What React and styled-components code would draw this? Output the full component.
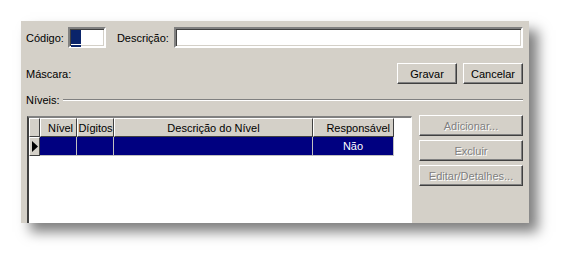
import React from 'react';
import styled, { createGlobalStyle } from 'styled-components';

const GlobalStyle = createGlobalStyle`
  body {
    margin: 0;
    background: #ffffff;
    font-family: "Liberation Sans", Arial, sans-serif;
    font-size: 11px;
    color: #000000;
    overflow: hidden;
  }
`;

const Page = styled.div`
  padding: 21px 0 0 21px;
  width: 571px;
  height: 266px;
  box-sizing: border-box;
`;

const Panel = styled.div`
  width: 508px;
  height: 202px;
  background: #d4d0c8;
  box-shadow: 9px 9px 12px rgba(0, 0, 0, 0.5);
  overflow: hidden;
  box-sizing: border-box;
  padding: 6px 6px 0 5px;
  display: flex;
  flex-direction: column;
`;

const Row = styled.div`
  display: flex;
  align-items: center;
  height: ${(p) => p.$h || 21}px;
  margin-top: ${(p) => p.$top || 0}px;
  flex: none;
`;

const Label = styled.span`
  white-space: nowrap;
  margin-right: ${(p) => p.$gap || 0}px;
`;

const Field = styled.div`
  height: 21px;
  box-sizing: border-box;
  background: #ffffff;
  border-style: solid;
  border-width: 2px;
  border-color: #808080 #ffffff #ffffff #808080;
  box-shadow: inset 1px 1px 0 #404040, inset -1px -1px 0 #d4d0c8;
  width: ${(p) => (p.$grow ? 'auto' : `${p.$w}px`)};
  flex: ${(p) => (p.$grow ? 1 : 'none')};
  margin-right: ${(p) => p.$gap || 0}px;
  padding: 1px 0 0 1px;
`;

const Caret = styled.div`
  width: 10px;
  height: 14px;
  background: #0a246a;
  border-bottom: 1px solid #ffffff;
  box-shadow: 0 2px 0 #0a246a;
`;

const Spacer = styled.div`
  flex: 1;
`;

const Button = styled.button`
  font-family: inherit;
  font-size: 11px;
  width: ${(p) => p.$w}px;
  height: 21px;
  padding: 0;
  margin-left: ${(p) => p.$gap || 0}px;
  background: #d4d0c8;
  border-style: solid;
  border-width: 1px;
  border-color: #ffffff #404040 #404040 #ffffff;
  box-shadow: inset -1px -1px 0 #808080;
  color: ${(p) => (p.disabled ? '#808080' : '#000000')};
  text-shadow: ${(p) => (p.disabled ? '1px 1px 0 #ffffff' : 'none')};
  flex: none;
`;

const Etched = styled.div`
  flex: 1;
  margin-left: 3px;
  border-top: 1px solid #808080;
  border-bottom: 1px solid #ffffff;
`;

const Body = styled.div`
  display: flex;
  margin-top: 9px;
  margin-left: 1px;
  flex: none;
`;

const Grid = styled.div`
  width: 385px;
  height: 130px;
  flex: none;
  box-sizing: border-box;
  background: #ffffff;
  border-style: solid;
  border-width: 2px 1px 2px 2px;
  border-color: #808080 #ffffff #ffffff #404040;
`;

const GridRow = styled.div`
  display: grid;
  grid-template-columns: 11px 37px 37px 199px 81px;
`;

const HeadCell = styled.div`
  height: 19px;
  box-sizing: border-box;
  background: #d4d0c8;
  border-style: solid;
  border-width: 1px;
  border-color: #ffffff #404040 #404040 #ffffff;
  display: flex;
  align-items: center;
  justify-content: ${(p) => p.$align || 'center'};
  padding: 0 3px;
  white-space: nowrap;
  overflow: hidden;
`;

const Cell = styled.div`
  height: 19px;
  box-sizing: border-box;
  background: #000080;
  color: #ffffff;
  border-right: 1px solid #c0c0c0;
  border-bottom: 1px solid #c0c0c0;
  display: flex;
  align-items: center;
  justify-content: center;
`;

const Indicator = styled.div`
  height: 19px;
  box-sizing: border-box;
  background: #d4d0c8;
  border-style: solid;
  border-width: 1px;
  border-color: #ffffff #404040 #404040 #ffffff;
  display: flex;
  align-items: center;
  justify-content: center;
`;

const Side = styled.div`
  display: flex;
  flex-direction: column;
  gap: 4px;
  margin-left: 7px;
  margin-top: -1px;
`;

export default function App() {
  return (
    <Page>
      <GlobalStyle />
      <Panel>
        <Row>
          <Label $gap={4}>Código:</Label>
          <Field $w={38} $gap={11}>
            <Caret />
          </Field>
          <Label $gap={5}>Descrição:</Label>
          <Field $grow />
        </Row>
        <Row $top={15}>
          <Label>Máscara:</Label>
          <Spacer />
          <Button $w={60}>Gravar</Button>
          <Button $w={60} $gap={6}>Cancelar</Button>
        </Row>
        <Row $top={9} $h={14}>
          <Label>Níveis:</Label>
          <Etched />
        </Row>
        <Body>
          <Grid>
            <GridRow>
              <HeadCell />
              <HeadCell $align="flex-end">Nível</HeadCell>
              <HeadCell>Dígitos</HeadCell>
              <HeadCell>Descrição do Nível</HeadCell>
              <HeadCell $align="flex-end">Responsável</HeadCell>
            </GridRow>
            <GridRow>
              <Indicator>
                <svg width="6" height="11" viewBox="0 0 6 11">
                  <path d="M0 0 L6 5.5 L0 11 Z" fill="#000" />
                </svg>
              </Indicator>
              <Cell />
              <Cell />
              <Cell />
              <Cell>Não</Cell>
            </GridRow>
          </Grid>
          <Side>
            <Button $w={104} disabled>Adicionar...</Button>
            <Button $w={104} disabled>Excluir</Button>
            <Button $w={104} disabled>Editar/Detalhes...</Button>
          </Side>
        </Body>
      </Panel>
    </Page>
  );
}
